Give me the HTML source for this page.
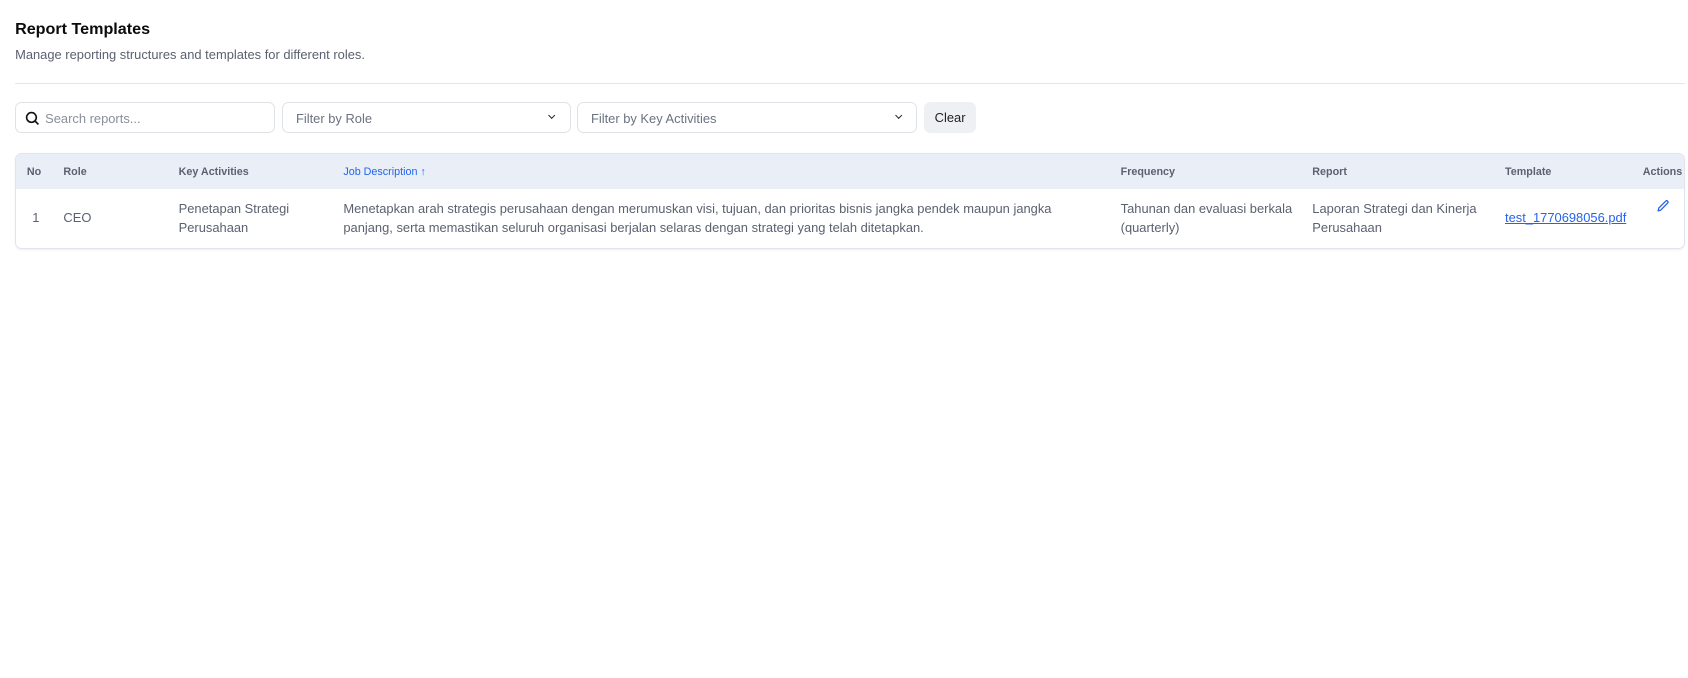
<!DOCTYPE html>
<html><head><style>
*{box-sizing:border-box;margin:0;padding:0}
body{width:1688px;height:678px;background:#fff;font-family:"Liberation Sans",sans-serif;color:#111;overflow:hidden}
#w{position:relative;zoom:1.0766;width:1568px;height:630px}
.a{position:absolute;white-space:nowrap}
h1{position:absolute;left:14px;top:19px;font-size:15px;font-weight:bold;color:#0b0b0b}
.sub{left:14px;top:44px;font-size:12px;color:#5b6170}
.hr{left:14px;top:77px;width:1551px;height:1px;background:#e4e6ea}
.box{position:absolute;top:95px;height:29px;border:1px solid #dfe2e7;border-radius:6px;font-size:12px;color:#6b7280}
.box span{position:absolute;top:7px}
.chev{position:absolute;top:9px;width:5px;height:5px;border-right:1.5px solid #222;border-bottom:1.5px solid #222;transform:rotate(45deg)}
.tbl{position:absolute;left:14px;top:142px;width:1551px;height:89px;border:1px solid #e1e4ea;border-radius:6px;overflow:hidden;box-shadow:0 1px 2px rgba(0,0,0,.05)}
.hd{position:absolute;left:0;top:0;width:100%;height:33px;background:#eaeff7}
.th{position:absolute;top:11px;font-size:10px;font-weight:bold;color:#5b6170}
.td{position:absolute;font-size:12px;color:#5b6170;line-height:18px;white-space:nowrap}
</style></head><body><div id="w">
<h1>Report Templates</h1>
<div class="a sub">Manage reporting structures and templates for different roles.</div>
<div class="a hr"></div>
<div class="box" style="left:14px;width:241px">
<svg style="position:absolute;left:8px;top:7px" width="14" height="14" viewBox="0 0 14 14"><circle cx="6" cy="6" r="4.5" fill="none" stroke="#111" stroke-width="1.5"/><path d="M9.3 9.3L12.5 12.5" stroke="#111" stroke-width="1.5"/></svg>
<span style="left:27px;color:#8a8f99">Search reports...</span></div>
<div class="box" style="left:262px;width:268px"><span style="left:12px">Filter by Role</span><div class="chev" style="left:247px"></div></div>
<div class="box" style="left:536px;width:316px"><span style="left:12px">Filter by Key Activities</span><div class="chev" style="left:295px"></div></div>
<div style="position:absolute;left:858px;top:95px;width:49px;height:29px;background:#eef0f4;border-radius:6px;font-size:12px;color:#222;text-align:center;line-height:29px">Clear</div>
<div class="tbl"><div class="hd"></div>
<div class="th" style="left:10px">No</div>
<div class="th" style="left:44px">Role</div>
<div class="th" style="left:151px">Key Activities</div>
<div class="th" style="left:304px;color:#2563eb;font-weight:normal">Job Description &#8593;</div>
<div class="th" style="left:1026px">Frequency</div>
<div class="th" style="left:1204px">Report</div>
<div class="th" style="left:1383px">Template</div>
<div class="th" style="left:1511px">Actions</div>
<div class="td" style="left:15px;top:50px">1</div>
<div class="td" style="left:44px;top:50px">CEO</div>
<div class="td" style="left:151px;top:42px">Penetapan Strategi<br>Perusahaan</div>
<div class="td" style="left:304px;top:42px">Menetapkan arah strategis perusahaan dengan merumuskan visi, tujuan, dan prioritas bisnis jangka pendek maupun jangka<br>panjang, serta memastikan seluruh organisasi berjalan selaras dengan strategi yang telah ditetapkan.</div>
<div class="td" style="left:1026px;top:42px">Tahunan dan evaluasi berkala<br>(quarterly)</div>
<div class="td" style="left:1204px;top:42px">Laporan Strategi dan Kinerja<br>Perusahaan</div>
<div class="td" style="left:1383px;top:50px;color:#2563eb;text-decoration:underline">test_1770698056.pdf</div>
<svg style="position:absolute;left:1523px;top:42px" width="13" height="13" viewBox="0 0 13 13"><path d="M2 11l.6-2.6L9 2a1.2 1.2 0 0 1 1.8 1.8L4.4 10.3z" fill="none" stroke="#2563eb" stroke-width="1.2" stroke-linejoin="round"/></svg>
</div>
</div></body></html>
